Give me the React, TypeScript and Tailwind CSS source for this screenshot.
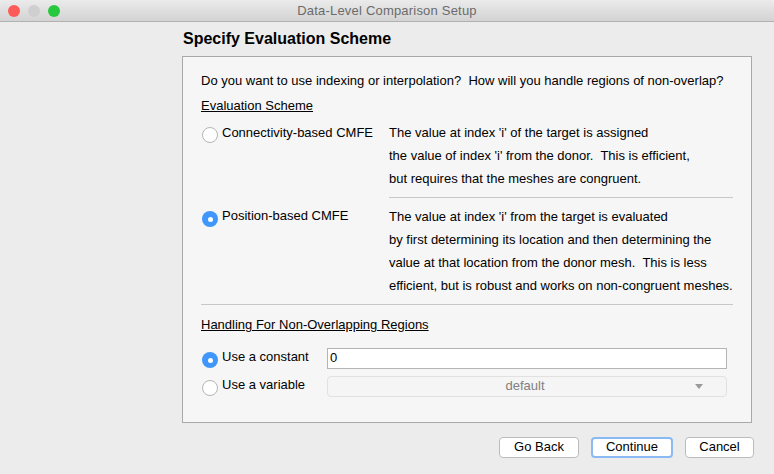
function Radio({ on }: { on?: boolean }) {
  if (on) {
    return (
      <span className="ml-[1px] w-4 h-4 rounded-full bg-[#3f96fb] flex items-center justify-center shrink-0">
        <span className="w-[5px] h-[5px] rounded-full bg-white" />
      </span>
    )
  }
  return <span className="block ml-[1px] w-4 h-4 rounded-full bg-white border border-[#b5b5b5] shrink-0" />
}

function Btn({ label, w, focus }: { label: string; w: string; focus?: boolean }) {
  return (
    <button
      className={
        focus
          ? `${w} h-[21px] bg-white rounded-[4px] border-2 border-[#8ab9f4] text-[13px] text-black flex items-center justify-center`
          : `${w} h-[21px] bg-white rounded-[4px] border border-[#bcbcbc] text-[13px] text-black flex items-center justify-center`
      }
    >
      <span className="-mt-[1px]">{label}</span>
    </button>
  )
}

export default function App() {
  return (
    <div className="w-[774px] h-[474px] bg-[#ececec] flex flex-col overflow-hidden font-['Liberation_Sans',sans-serif] text-[13px] text-black">
      <div className="h-[22px] shrink-0 rounded-t-[5px] bg-gradient-to-b from-[#ebebeb] to-[#d3d3d3] border-b border-[#b1b1b1] relative flex items-center justify-center">
        <div className="absolute left-[8px] top-[5px] flex gap-[8px]">
          <span className="w-3 h-3 rounded-full bg-[#fc5b57]" />
          <span className="w-3 h-3 rounded-full bg-[#cfcfcf]" />
          <span className="w-3 h-3 rounded-full bg-[#28c83e]" />
        </div>
        <span className="text-[#6b6b6b] text-[13px] tracking-[0.2px]">Data-Level Comparison Setup</span>
      </div>

      <div className="pl-[182px] pr-[20px] flex flex-col">
        <h1 className="h-[34px] pl-[1px] pt-[7px] font-bold text-[16px] leading-[20px]">Specify Evaluation Scheme</h1>
        <div className="w-[570px] h-[367px] bg-[#f6f6f6] border border-[#a9a9a9] pl-[18px] pr-[18px] flex flex-col">
          <p className="mt-[16px] h-[16px] leading-[16px] whitespace-nowrap">
            Do you want to use indexing or interpolation?&nbsp; How will you handle regions of non-overlap?
          </p>
          <p className="mt-[9px] h-[16px] leading-[16px] underline">Evaluation Scheme</p>

          <div className="mt-[6px] flex">
            <div className="w-[188px] flex items-start pt-[6px] h-[26px]">
              <span className="mt-[1px] flex"><Radio /></span>
              <span className="ml-[4px] leading-[14px]">Connectivity-based CMFE</span>
            </div>
            <div className="flex flex-col leading-[23px] mt-[1px]">
              <span>The value at index 'i' of the target is assigned</span>
              <span>the value of index 'i' from the donor.&nbsp; This is efficient,</span>
              <span>but requires that the meshes are congruent.</span>
            </div>
          </div>
          <div className="ml-[188px] mt-[7px] h-px shrink-0 bg-[#c8c8c8]" />

          <div className="mt-[7px] flex">
            <div className="w-[188px] flex items-start pt-[4px] h-[26px]">
              <span className="mt-[2px] flex"><Radio on /></span>
              <span className="ml-[4px] leading-[14px]">Position-based CMFE</span>
            </div>
            <div className="flex flex-col leading-[23px] whitespace-nowrap">
              <span>The value at index 'i' from the target is evaluated</span>
              <span>by first determining its location and then determining the</span>
              <span>value at that location from the donor mesh.&nbsp; This is less</span>
              <span>efficient, but is robust and works on non-congruent meshes.</span>
            </div>
          </div>
          <div className="mt-[7px] h-px shrink-0 bg-[#c8c8c8]" />

          <p className="mt-[12px] h-[16px] leading-[16px] underline">Handling For Non-Overlapping Regions</p>

          <div className="mt-[15px] flex items-center h-[21px]">
            <span className="w-[126px] flex items-center">
              <span className="mt-[3px] flex"><Radio on /></span>
              <span className="ml-[4px] -mt-[3px]">Use a constant</span>
            </span>
            <div className="w-[400px] h-[21px] bg-white border border-[#b4b4b4] px-[2px] flex items-center">
              <span className="-mt-[2px]">0</span>
            </div>
          </div>
          <div className="mt-[7px] flex items-center h-[21px]">
            <span className="w-[126px] flex items-center">
              <span className="mt-[3px] flex"><Radio /></span>
              <span className="ml-[4px] -mt-[3px]">Use a variable</span>
            </span>
            <div className="w-[400px] h-[21px] bg-[#f5f5f5] border border-[#e1e1e1] rounded-[4px] relative flex items-center justify-center pr-[4px] text-[#808080]">
              <span className="-mt-[2px]">default</span>
              <span className="absolute right-[23px] top-[7px] w-0 h-0 border-l-[4px] border-r-[4px] border-t-[5px] border-l-transparent border-r-transparent border-t-[#9a9a9a]" />
            </div>
          </div>
        </div>

        <div className="w-[572px] mt-[14px] flex justify-end">
          <Btn label="Go Back" w="w-[80px]" />
          <span className="w-[12px]" />
          <Btn label="Continue" w="w-[82px]" focus />
          <span className="w-[12px]" />
          <Btn label="Cancel" w="w-[69px]" />
        </div>
      </div>
    </div>
  )
}
